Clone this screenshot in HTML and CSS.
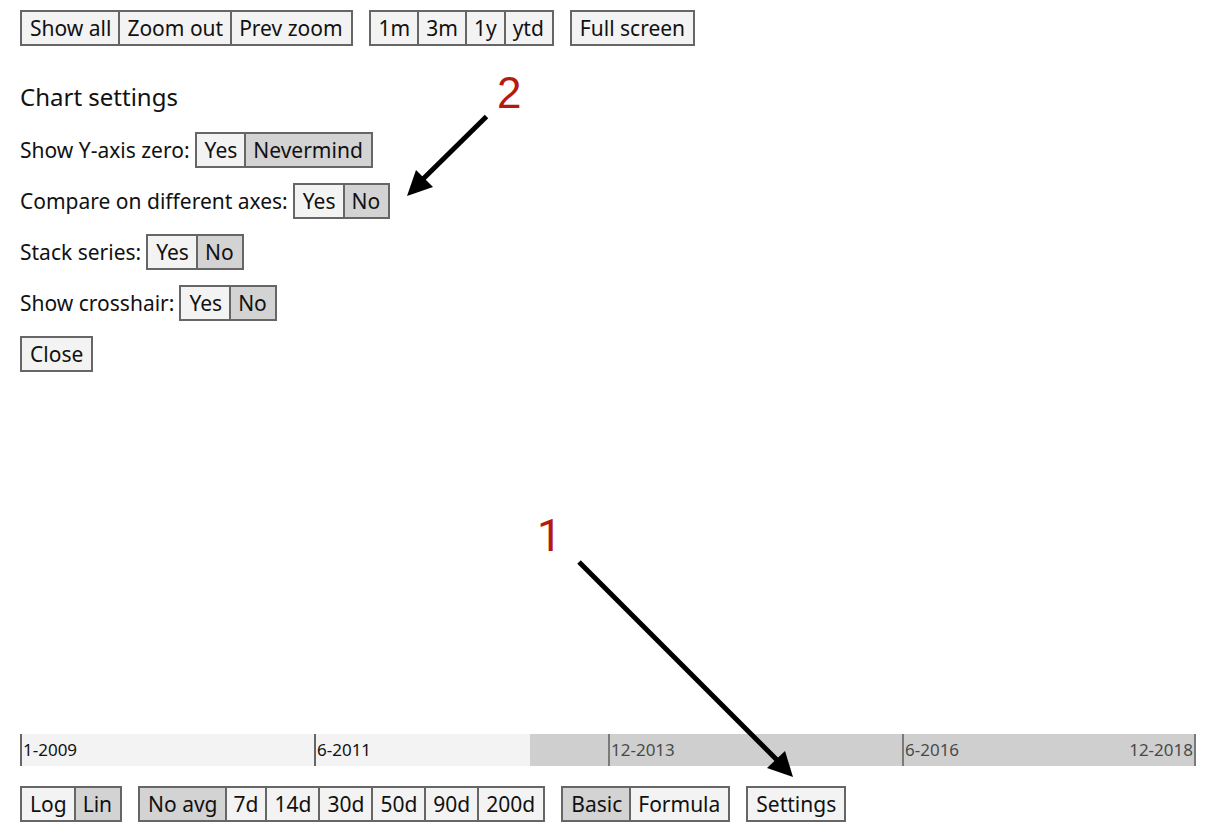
FILE: index.html
```html
<!DOCTYPE html>
<html lang="en">
<head>
<meta charset="utf-8">
<title>Chart settings</title>
<link rel="stylesheet" href="styles.css">
</head>
<body>
<div class="page">
  <header class="toolbar">
    <div class="group"><button>Show all</button><button>Zoom out</button><button>Prev zoom</button></div>
    <div class="group"><button>1m</button><button>3m</button><button>1y</button><button>ytd</button></div>
    <div class="group"><button>Full screen</button></div>
  </header>

  <main class="settings">
    <h1 class="title">Chart settings</h1>
    <div class="row" role="group" aria-labelledby="zero">
      <span id="zero">Show Y-axis zero:</span>
      <div class="group"><button>Yes</button><button class="on">Nevermind</button></div>
    </div>
    <div class="row" role="group" aria-labelledby="axes">
      <span id="axes">Compare on different axes:</span>
      <div class="group"><button>Yes</button><button class="on">No</button></div>
    </div>
    <div class="row" role="group" aria-labelledby="stack">
      <span id="stack">Stack series:</span>
      <div class="group"><button>Yes</button><button class="on">No</button></div>
    </div>
    <div class="row" role="group" aria-labelledby="cross">
      <span id="cross">Show crosshair:</span>
      <div class="group"><button>Yes</button><button class="on">No</button></div>
    </div>
    <div class="row"><div class="group"><button>Close</button></div></div>
  </main>

  <div class="timeline">
    <div class="tick">1-2009</div>
    <div class="tick">6-2011</div>
    <div class="tick">12-2013</div>
    <div class="tick last"><span>6-2016</span><span>12-2018</span></div>
    <div class="brush"></div>
  </div>

  <footer class="toolbar">
    <div class="group"><button>Log</button><button class="on">Lin</button></div>
    <div class="group"><button class="on">No avg</button><button>7d</button><button>14d</button><button>30d</button><button>50d</button><button>90d</button><button>200d</button></div>
    <div class="group"><button class="on">Basic</button><button>Formula</button></div>
    <div class="group"><button>Settings</button></div>
  </footer>

  <svg class="notes" width="1222" height="832" viewBox="0 0 1222 832" aria-hidden="true">
    <path d="M486.500 116.500 421 181" stroke="#000" stroke-width="5"/>
    <path d="M407 196 416 170 433 187Z"/>
    <path d="M579 562 778 761" stroke="#000" stroke-width="5"/>
    <path d="M793 777 767 768 785 751Z"/>
  </svg>
  <span class="step step-two">2</span>
  <span class="step step-one">1</span>
</div>
</body>
</html>
```

FILE: styles.css
```css
* { box-sizing: border-box; }

body {
  margin: 0;
  background: #fff;
  color: #111;
  font: 21px/32px "Noto Sans", sans-serif;
}

.page {
  position: relative;
  display: flex;
  flex-direction: column;
  min-height: 100vh;
  padding: 10px 26px 10px 20px;
  overflow: hidden;
}

.toolbar { display: flex; gap: 16px; }

.group {
  display: flex;
  border: 2px solid #666;
}

button {
  margin: 0;
  padding: 0 7px;
  border: 0;
  background: #f3f3f3;
  color: inherit;
  font: inherit;
  cursor: pointer;
}

button:first-child { padding-left: 8px; }
button:last-child { padding-right: 8px; }
button + button { border-left: 2px solid #666; }
button.on { background: #d3d3d3; }

.settings {
  display: flex;
  flex-direction: column;
  flex: 1;
  gap: 15px;
  padding-top: 34px;
}

.title {
  margin: 0 0 3px;
  font-size: 24px;
  font-weight: 400;
  line-height: 34px;
}

.row {
  display: flex;
  align-items: center;
  gap: 5px;
}

.timeline {
  position: relative;
  display: grid;
  grid-template-columns: repeat(4, 1fr);
  margin-bottom: 20px;
  background: #f3f3f3;
  font-size: 17px;
}

.tick {
  padding-left: 1px;
  border-left: 2px solid #666;
}

.last {
  display: flex;
  justify-content: space-between;
  padding-right: 1px;
  border-right: 2px solid #666;
}

.brush {
  position: absolute;
  inset: 0 0 0 43.4%;
  background: rgba(153, 153, 153, 0.4);
}

.notes {
  position: absolute;
  top: 0;
  left: 0;
  pointer-events: none;
}

.step {
  position: absolute;
  color: #b51a0e;
  font: 44px/44px "Liberation Sans", sans-serif;
}

.step-two { top: 71px; left: 497px; }
.step-one { top: 514px; left: 537px; font-family: Roboto, sans-serif; }
```
